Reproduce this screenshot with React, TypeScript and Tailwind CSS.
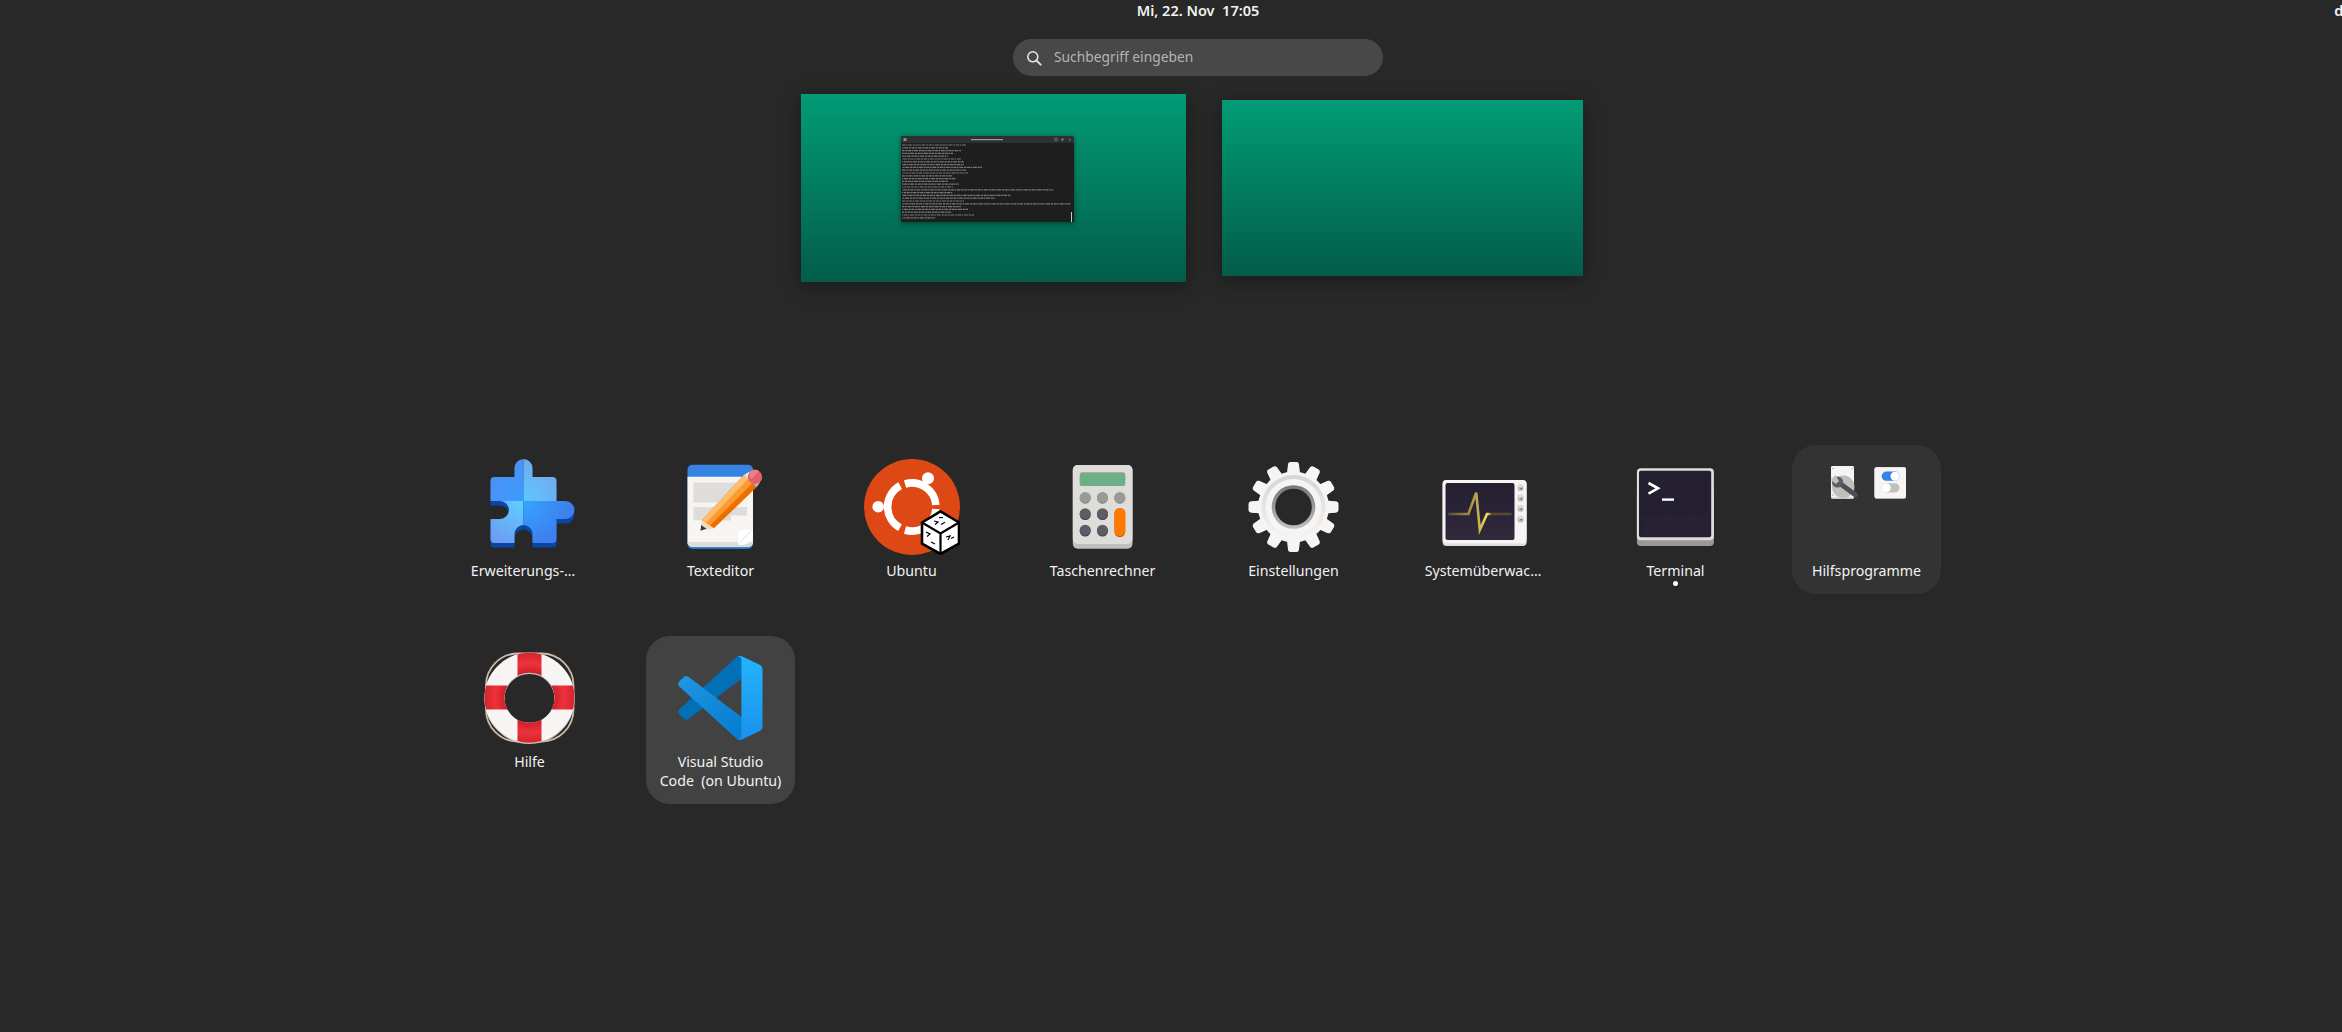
import React from 'react';

const PUZZLE =
  'M32.5 9a9 9 0 0 1 18 0V18H70.5a4 4 0 0 1 4 4V42H83.5a9 9 0 0 1 0 18H74.5V80a4 4 0 0 1-4 4H50.5V75a9 9 0 0 0-18 0V84H12.5a4 4 0 0 1-4-4V60H18a9 9 0 0 0 0-18H8.5V22a4 4 0 0 1 4-4H32.5Z';

const ExtensionsIcon = () => (
  <svg viewBox="0 0 96 96" className="w-24 h-24">
    <defs>
      <radialGradient id="pzTL" gradientUnits="userSpaceOnUse" cx="41.5" cy="42" r="45">
        <stop offset="0" stopColor="#3a9cff" />
        <stop offset="1" stopColor="#4f8ff2" />
      </radialGradient>
      <radialGradient id="pzTR" gradientUnits="userSpaceOnUse" cx="41.5" cy="42" r="48">
        <stop offset="0" stopColor="#5cc8ff" />
        <stop offset="1" stopColor="#74a4ec" />
      </radialGradient>
      <radialGradient id="pzBL" gradientUnits="userSpaceOnUse" cx="41.5" cy="42" r="48">
        <stop offset="0" stopColor="#5ed2ff" />
        <stop offset="1" stopColor="#6c9cf2" />
      </radialGradient>
      <radialGradient id="pzBR" gradientUnits="userSpaceOnUse" cx="41.5" cy="42" r="45">
        <stop offset="0" stopColor="#36a4ff" />
        <stop offset="1" stopColor="#3d80ee" />
      </radialGradient>
      <clipPath id="pzClip">
        <path d={PUZZLE} />
      </clipPath>
    </defs>
    <path d={PUZZLE} fill="#0b45a6" transform="translate(0 4.6)" />
    <g clipPath="url(#pzClip)">
      <rect x="0" y="0" width="41.5" height="42" fill="url(#pzTL)" />
      <rect x="41.5" y="0" width="54" height="42" fill="url(#pzTR)" />
      <rect x="0" y="42" width="41.5" height="48" fill="url(#pzBL)" />
      <rect x="41.5" y="42" width="54" height="48" fill="url(#pzBR)" />
    </g>
  </svg>
);

const TextEditorIcon = () => (
  <svg viewBox="0 0 96 96" className="w-24 h-24">
    <rect x="14.5" y="5.7" width="65.5" height="84" rx="5" fill="#3584e4" />
    <path d="M14.5 17.7H80V83a5 5 0 0 1-5 5H19.5a5 5 0 0 1-5-5Z" fill="#f6f5f4" />
    <path d="M14.5 83H80a5 5 0 0 1-5 5H19.5a5 5 0 0 1-5-5Z" fill="#deddda" />
    <path d="M20.5 23.5H74V38H51V43.5H20.5Z" fill="#deddda" />
    <path d="M20.5 48H74V56.5H58V61.5H20.5Z" fill="#deddda" />
    <path d="M65 86V76a6 6 0 0 1 5-5.5L80 70V77Q78 85 70 86Z" fill="#ffffff" />
    <path d="M65 86Q72 78 79.5 70.5" stroke="#e4e3e0" strokeWidth="1" fill="none" />
    {/* pencil */}
    <path d="M27.5 71.7L29 61L41 69.3Z" fill="#f2dcb8" />
    <path d="M27.5 71.7L28.2 66L33.4 69.8Z" fill="#3d3846" />
    <path d="M29 61L71 16L83.5 28.3L41 69.3Z" fill="#ed6f00" />
    <path d="M29 61L71 16L79.4 24.3L37 66.6Z" fill="#ff9a30" />
    <path d="M29 61L71 16L75 20L33 63.8Z" fill="#ffbe6f" />
    <path d="M71 16L76 13L87 23.5L83.5 28.3Z" fill="#c0bfbc" />
    <path d="M71 16L76 13L80 16.6L75 20Z" fill="#e4e3e0" />
    <circle cx="82" cy="18" r="7.2" fill="#e4606a" />
    <path d="M76 13.6A7.2 7.2 0 0 1 86 12.2L78 20.5Z" fill="#ed7f86" />
  </svg>
);

const UbuntuIcon = () => (
  <svg viewBox="0 0 96 96" className="w-24 h-24">
    <circle cx="48" cy="48" r="48" fill="#dd4814" />
    {/* ring segments */}
    <path d="M36.2 26.7A24 24 0 0 0 36 68.8" stroke="#fff" strokeWidth="7.6" fill="none" />
    <path d="M41 25A24 24 0 0 1 71.9 46" stroke="#fff" strokeWidth="7.6" fill="none" />
    <path d="M41 71A24 24 0 0 0 71.9 50" stroke="#fff" strokeWidth="7.6" fill="none" />
    <circle cx="64" cy="19.3" r="6" fill="#fff" />
    <circle cx="14.2" cy="47.7" r="5.8" fill="#fff" />
    <circle cx="64" cy="76" r="6" fill="#fff" />
    {/* dice badge */}
    <path d="M76.5 52.3L95 63.5V84.6L76.5 95L58 84.6V63.5Z" fill="#fff" stroke="#000" strokeWidth="2.6" strokeLinejoin="round" />
    <path d="M58 63.5L76.5 74.5L95 63.5M76.5 74.5V95" fill="none" stroke="#000" strokeWidth="2.2" />
    <path d="M70 62l4 1-3 2.5M77 65.5l4-2.2M79 58.5l-4 .2M62 73l4 2-3 2.5M67 83l4 2M82 78l4-1-2 4M87 79.5l3-1.5" fill="none" stroke="#000" strokeWidth="1.2" />
  </svg>
);

const CalculatorIcon = () => (
  <svg viewBox="0 0 96 96" className="w-24 h-24">
    <rect x="17.8" y="6" width="59.7" height="83.7" rx="5" fill="#c0bfbc" />
    <rect x="17.8" y="6" width="59.7" height="79" rx="5" fill="#deddda" />
    <rect x="24.8" y="13.3" width="45.4" height="13.7" rx="2.5" fill="#9a9996" />
    <rect x="24.8" y="14.6" width="45.4" height="12.4" rx="2.5" fill="#6db088" />
    {[30.2, 47.5, 64.8].map((cx) => (
      <g key={cx}>
        <circle cx={cx} cy="39.2" r="5.5" fill="#77767b" />
        <circle cx={cx} cy="38.4" r="5.5" fill="#9a9996" />
      </g>
    ))}
    {[55.5, 72].flatMap((cy) =>
      [30.2, 47.5].map((cx) => (
        <g key={`${cx}-${cy}`}>
          <circle cx={cx} cy={cy} r="5.5" fill="#3d3846" />
          <circle cx={cx} cy={cy - 0.8} r="5.5" fill="#5e5c64" />
        </g>
      )),
    )}
    <rect x="59.5" y="49" width="10.7" height="29" rx="5.3" fill="#c64600" />
    <rect x="59.5" y="49" width="10.7" height="28" rx="5.3" fill="#ff7800" />
  </svg>
);

const GEAR_TEETH = [0, 30, 60, 90, 120, 150, 180, 210, 240, 270, 300, 330];

const SettingsIcon = () => (
  <svg viewBox="0 0 96 96" className="w-24 h-24">
    <defs>
      <linearGradient id="gearBevel" x1="0" y1="0" x2="0" y2="1">
        <stop offset="0" stopColor="#d6d5d2" />
        <stop offset="1" stopColor="#f6f5f4" />
      </linearGradient>
      <linearGradient id="gearHole" x1="0" y1="0" x2="0" y2="1">
        <stop offset="0" stopColor="#77767b" />
        <stop offset="1" stopColor="#c0bfbc" />
      </linearGradient>
    </defs>
    <g transform="translate(47.5 48)">
      {GEAR_TEETH.map((deg) => (
        <g key={deg} transform={`rotate(${deg})`}>
          <path d="M-6.5 -32L-5.4 -43a2.5 2.5 0 0 1 2.4-2H3a2.5 2.5 0 0 1 2.4 2L6.5 -32Z" fill="#c0bfbc" transform="translate(0 .6)" />
          <path d="M-6.5 -32L-5.4 -43a2.5 2.5 0 0 1 2.4-2H3a2.5 2.5 0 0 1 2.4 2L6.5 -32Z" fill="#f6f5f4" />
        </g>
      ))}
      <circle r="35.5" fill="#f6f5f4" />
      <circle r="32" fill="url(#gearBevel)" />
      <circle r="28" fill="#f6f5f4" />
      <circle r="21.8" fill="url(#gearHole)" />
      <circle r="18.3" fill="#282828" />
    </g>
  </svg>
);

const MonitorIcon = () => (
  <svg viewBox="0 0 96 96" className="w-24 h-24">
    <defs>
      <linearGradient id="pulse" gradientUnits="userSpaceOnUse" x1="11" y1="0" x2="75" y2="0">
        <stop offset="0" stopColor="#5c4a30" />
        <stop offset="0.45" stopColor="#b8a74c" />
        <stop offset="0.62" stopColor="#f8e45c" />
        <stop offset="0.68" stopColor="#5c4a30" />
        <stop offset="1" stopColor="#5c4a30" />
      </linearGradient>
      <linearGradient id="monScreen" x1="0" y1="0" x2="0" y2="1">
        <stop offset="0" stopColor="#241f31" />
        <stop offset="1" stopColor="#302a3b" />
      </linearGradient>
    </defs>
    <rect x="5.6" y="21" width="84" height="66" rx="4" fill="#deddda" />
    <rect x="5.6" y="21" width="84" height="63.5" rx="4" fill="#f6f5f4" />
    <rect x="8.5" y="24" width="69" height="57" rx="2" fill="url(#monScreen)" />
    <path d="M11.4 55H31.4L39.2 33.7L42.8 71L50 55H74.6" fill="none" stroke="url(#pulse)" strokeWidth="2.6" strokeLinejoin="miter" />
    {[25.5, 35.8, 46.2, 56.8].map((y) => (
      <g key={y}>
        <rect x="80.6" y={y} width="5.8" height="6.6" rx="2" fill="#c0bfbc" />
        <rect x="80.6" y={y} width="5.8" height="2.6" rx="1.2" fill="#deddda" />
        <circle cx="84.2" cy={y + 4} r=".7" fill="#3d3846" />
      </g>
    ))}
  </svg>
);

const TerminalIcon = () => (
  <svg viewBox="0 0 96 96" className="w-24 h-24">
    <defs>
      <pattern id="termDots" width="3" height="3" patternUnits="userSpaceOnUse">
        <rect width="1.5" height="1.5" fill="#3a3546" />
      </pattern>
    </defs>
    <rect x="8.9" y="30" width="77" height="57" rx="4" fill="#9a9996" />
    <rect x="8.9" y="9.3" width="77" height="72" rx="4" fill="#deddda" />
    <rect x="11" y="11.7" width="72.2" height="66.6" rx="2" fill="#241f31" />
    <rect x="14" y="56" width="66" height="20" fill="url(#termDots)" opacity=".35" />
    <path d="M20.5 24L30 29.3L20.5 34.6" fill="none" stroke="#fff" strokeWidth="2.6" />
    <rect x="34" y="39.4" width="12" height="2.4" fill="#fff" />
  </svg>
);

const DiskToolIcon = () => (
  <svg viewBox="0 0 48 48" className="w-12 h-12">
    <rect x="12" y="7" width="23" height="33" rx="1.5" fill="#c8c7c4" />
    <rect x="12" y="7" width="23" height="31.5" rx="1.5" fill="#f6f5f4" />
    <circle cx="24.2" cy="27.7" r="11.3" fill="#c0bfbc" />
    <circle cx="14" cy="9.5" r=".7" fill="#9a9996" />
    <circle cx="33" cy="9.5" r=".7" fill="#9a9996" />
    <circle cx="14" cy="36" r=".7" fill="#9a9996" />
    <path d="M21 24.5L36.5 36" stroke="#4f4e53" strokeWidth="4.8" strokeLinecap="round" />
    <circle cx="18.5" cy="23" r="5.6" fill="#5e5c64" />
    <path d="M11.5 21L16.5 16L20 22L17 25Z" fill="#c0bfbc" />
  </svg>
);

const TweaksIcon = () => (
  <svg viewBox="0 0 48 48" className="w-12 h-12">
    <rect x="7.5" y="8.3" width="31.5" height="31.4" rx="2" fill="#deddda" />
    <rect x="7.5" y="8.3" width="31.5" height="30.6" rx="2" fill="#f6f5f4" />
    <rect x="14.7" y="12.6" width="17.8" height="9.2" rx="4.6" fill="#3584e4" />
    <circle cx="28" cy="17.2" r="4.5" fill="#fff" />
    <rect x="14.7" y="24.2" width="17.8" height="9.2" rx="4.6" fill="#c0bfbc" />
    <circle cx="19.2" cy="28.8" r="4.5" fill="#fff" />
  </svg>
);

const HelpIcon = () => (
  <svg viewBox="0 0 96 96" className="w-24 h-24">
    <defs>
      <radialGradient id="buoyRed" gradientUnits="userSpaceOnUse" cx="47.5" cy="47.7" r="45.5">
        <stop offset="0.54" stopColor="#cc1f2b" />
        <stop offset="0.76" stopColor="#ed333b" />
        <stop offset="1" stopColor="#d4232f" />
      </radialGradient>
      <clipPath id="buoyClip">
        <path clipRule="evenodd" d="M2.5 47.7a45 45 0 1 0 90 0a45 45 0 1 0-90 0ZM22.5 47.7a25 25 0 1 1 50 0a25 25 0 1 1-50 0Z" />
      </clipPath>
    </defs>
    <rect x="4" y="3.5" width="87.5" height="88" rx="32" fill="none" stroke="#cdb8a5" strokeWidth="1.8" />
    <circle cx="47.5" cy="49" r="35" fill="none" stroke="#c0bfbc" strokeWidth="20" />
    <circle cx="47.5" cy="47.7" r="35" fill="none" stroke="#f6f5f4" strokeWidth="20" />
    <g clipPath="url(#buoyClip)">
      <rect x="35.5" y="0" width="24" height="96" fill="url(#buoyRed)" />
      <rect x="0" y="35.5" width="96" height="24" fill="url(#buoyRed)" />
    </g>
  </svg>
);

const VSCodeIcon = () => (
  <svg viewBox="0 0 96 96" className="w-24 h-24">
    <defs>
      <linearGradient id="vsRight" x1="0" y1="0" x2="0" y2="1">
        <stop offset="0" stopColor="#24b4fb" />
        <stop offset="1" stopColor="#1a92ee" />
      </linearGradient>
      <linearGradient id="vsLow" x1="0" y1="0" x2="1" y2="1">
        <stop offset="0" stopColor="#1e97e4" />
        <stop offset="1" stopColor="#0078cc" />
      </linearGradient>
    </defs>
    <g transform="translate(5.2 5.7) scale(.843)">
      <path fill="#0270b6" d="M96.4614 10.7962L75.8569 0.875542C73.4719 -0.272773 70.6217 0.211611 68.75 2.08333L1.29858 63.5832C-0.515693 65.2373 -0.513607 68.0937 1.30308 69.7452L6.81272 74.754C8.29793 76.1042 10.5347 76.2036 12.1338 74.9905L93.3609 13.3699C96.086 11.3026 100 13.2462 100 16.6667V16.4275C100 14.0265 98.6246 11.8378 96.4614 10.7962Z" />
      <path fill="url(#vsLow)" d="M96.4614 89.2038L75.8569 99.1245C73.4719 100.273 70.6217 99.7884 68.75 97.9167L1.29858 36.4168C-0.515693 34.7627 -0.513607 31.9063 1.30308 30.2548L6.81272 25.246C8.29793 23.8958 10.5347 23.7964 12.1338 25.0095L93.3609 86.6301C96.086 88.6974 100 86.7538 100 83.3333V83.5725C100 85.9735 98.6246 88.1622 96.4614 89.2038Z" />
      <path fill="url(#vsRight)" d="M75.8578 99.1263C73.4721 100.274 70.6219 99.7885 68.75 97.9166C71.0564 100.223 75 98.5895 75 95.3278V4.67213C75 1.41039 71.0564 -0.223106 68.75 2.08329C70.6219 0.211402 73.4721 -0.273666 75.8578 0.873633L96.4587 10.7807C98.6234 11.8217 100 14.0112 100 16.4132V83.5871C100 85.9891 98.6234 88.1786 96.4586 89.2196L75.8578 99.1263Z" />
    </g>
  </svg>
);

const SearchIcon = () => (
  <svg viewBox="0 0 16 16" className="w-4 h-4" fill="none" stroke="#e4e4e4" strokeWidth="1.6">
    <circle cx="6.8" cy="6.8" r="5" />
    <path d="M10.6 10.6L14.6 14.6" strokeLinecap="round" strokeWidth="2" />
  </svg>
);

// widths of the shell output lines seen in the little terminal window
const LINE_WIDTHS = [64, 46, 59, 51, 46, 59, 62, 62, 80, 64, 66, 51, 54, 46, 57, 51, 151, 51, 109, 93, 62, 169, 59, 66, 49, 72, 33];

const TerminalThumb = () => (
  <div className="absolute left-[100px] top-[42px] w-[173px] h-[86px] bg-[#1e1e1e] rounded-t-[2px] overflow-hidden shadow-[0_1px_5px_rgba(0,0,0,0.45)]">
    <svg viewBox="0 0 173 86" className="w-full h-full">
      <rect width="173" height="7" fill="#303030" />
      <rect x="2.5" y="2" width="3" height="3" fill="#8a8a8a" />
      <rect x="70" y="3" width="32" height="1.2" fill="#9a9a9a" />
      <circle cx="155" cy="3.5" r="1.4" fill="none" stroke="#9a9a9a" strokeWidth=".6" />
      <rect x="160.5" y="2.6" width="2" height="2" fill="#8a8a8a" />
      <rect x="168" y="3" width="1.4" height="1.4" fill="#8a8a8a" />
      {LINE_WIDTHS.map((w, i) => (
        <line
          key={i}
          x1="1"
          x2={1 + w}
          y1={9 + i * 2.8}
          y2={9 + i * 2.8}
          stroke="#b4b4b4"
          strokeWidth="1.2"
          strokeDasharray="3 .6 1.6 .7 4 .8 2.2 .6"
          strokeDashoffset={i * 3.7}
          opacity=".6"
        />
      ))}
      <rect x="170" y="76" width="1" height="10" fill="#c8c8c8" />
    </svg>
  </div>
);

interface AppTileProps {
  label: string;
  icon: React.ReactNode;
  bg?: string;
  labelClass?: string;
  running?: boolean;
}

const AppTile: React.FC<AppTileProps> = ({ label, icon, bg = '', labelClass = '', running = false }) => (
  <div className={`relative flex flex-col items-center w-[149px] pt-[14px] pb-[14px] rounded-[24px] ${bg}`}>
    <div className="w-24 h-24">{icon}</div>
    <div className={`mt-[6px] w-[132px] text-center text-[14.2px] leading-[19px] text-[#f2f2f2] whitespace-pre ${labelClass}`}>
      {label}
    </div>
    {running && <div className="absolute left-[72px] top-[136px] w-[5px] h-[5px] rounded-full bg-white" />}
  </div>
);

const FolderIcon = () => (
  <div className="w-24 h-24 grid grid-cols-2 grid-rows-2">
    <DiskToolIcon />
    <TweaksIcon />
  </div>
);

export default function App() {
  return (
    <div className="w-screen h-screen overflow-hidden bg-[#282828] font-['Noto_Sans',sans-serif]">
      {/* the shell is wider than the capture, so everything centres on x=1198 */}
      <div className="w-[2396px]">
        <div className="grid grid-cols-[1fr_auto_1fr] h-[21px] items-center text-[14.5px] font-semibold text-[#f2f2f2] leading-none">
          <div />
          <div className="whitespace-pre">Mi, 22. Nov  17:05</div>
          <div className="pl-[1075px]">de</div>
        </div>

        <div className="flex justify-center mt-[18px]">
          <div className="flex items-center w-[370px] h-[37px] rounded-full bg-[#484848] pl-[13px] gap-[12px]">
            <SearchIcon />
            <span className="text-[13.8px] text-[#b4b4b4]">Suchbegriff eingeben</span>
          </div>
        </div>

        <div className="flex items-center gap-[36px] pl-[801px] mt-[18px]">
          <div className="relative w-[385px] h-[188px] bg-linear-to-b/srgb from-[#019c75] to-[#035c49] shadow-[0_4px_18px_rgba(0,0,0,0.35)]">
            <TerminalThumb />
          </div>
          <div className="w-[361px] h-[176px] bg-linear-to-b/srgb from-[#019c75] to-[#035c49] shadow-[0_4px_18px_rgba(0,0,0,0.35)]" />
        </div>

        <div className="grid grid-cols-[repeat(8,149px)] gap-x-[42px] gap-y-[42px] pl-[455px] mt-[163px]">
          <AppTile label="Erweiterungs-…" icon={<ExtensionsIcon />} labelClass="pr-[13px]" />
          <AppTile label="Texteditor" icon={<TextEditorIcon />} />
          <AppTile label="Ubuntu" icon={<UbuntuIcon />} />
          <AppTile label="Taschenrechner" icon={<CalculatorIcon />} />
          <AppTile label="Einstellungen" icon={<SettingsIcon />} />
          <AppTile label="Systemüberwac…" icon={<MonitorIcon />} labelClass="pr-[3px]" />
          <AppTile label="Terminal" icon={<TerminalIcon />} running />
          <AppTile label="Hilfsprogramme" icon={<FolderIcon />} bg="bg-[#333333]" />
          <AppTile label="Hilfe" icon={<HelpIcon />} />
          <AppTile label={'Visual Studio\nCode  (on Ubuntu)'} icon={<VSCodeIcon />} bg="bg-[#424242]" />
        </div>
      </div>
    </div>
  );
}
